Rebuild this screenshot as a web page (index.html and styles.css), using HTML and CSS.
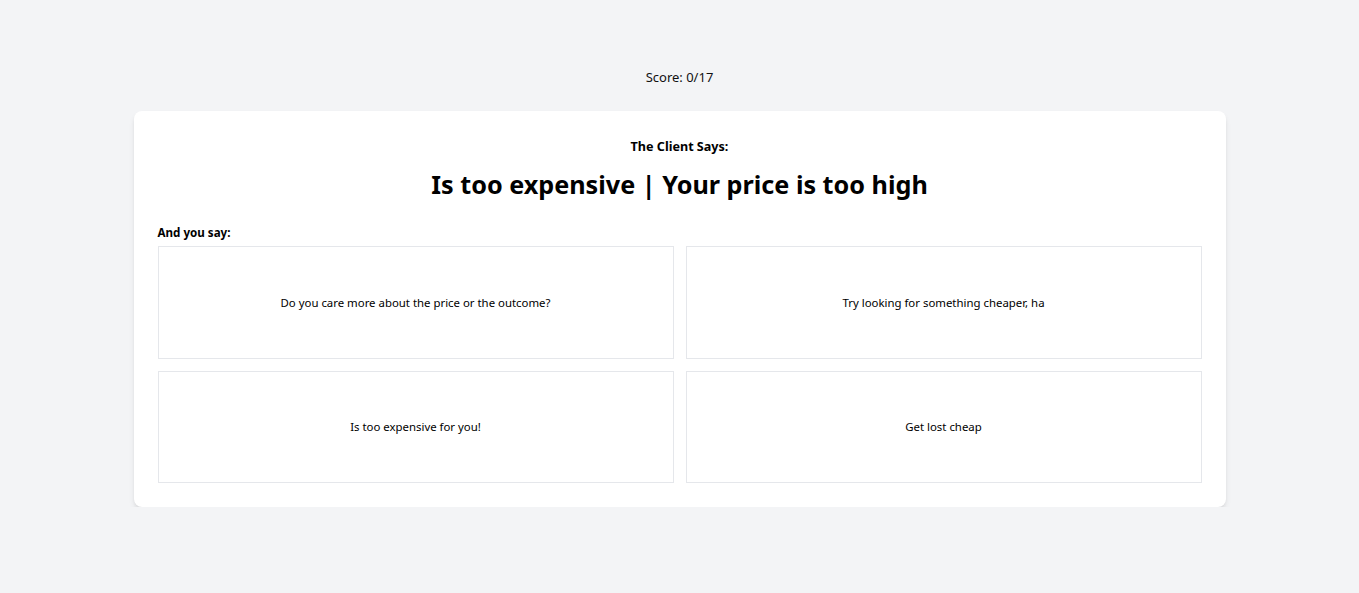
FILE: index.html
```html
<!DOCTYPE html>
<html lang="en">
<head>
<meta charset="utf-8">
<title>Quiz</title>
<link rel="stylesheet" href="styles.css">
</head>
<body>
<main class="page">
  <div class="score">Score: 0/17</div>
  <section class="card">
    <div class="label">The Client Says:</div>
    <h1 class="quote">Is too expensive | Your price is too high</h1>
    <div class="prompt">And you say:</div>
    <div class="options">
      <button class="option">Do you care more about the price or the outcome?</button>
      <button class="option">Try looking for something cheaper, ha</button>
      <button class="option">Is too expensive for you!</button>
      <button class="option">Get lost cheap</button>
    </div>
  </section>
</main>
</body>
</html>
```

FILE: styles.css
```css
html, body {
  margin: 0;
  padding: 0;
}
body {
  background: #f3f4f6;
  font-family: "Noto Sans", "Open Sans", sans-serif;
  color: #000;
}
.page {
  padding-top: 67px;
  display: flex;
  flex-direction: column;
  align-items: center;
}
.score {
  font-size: 13px;
  line-height: 20px;
  margin-bottom: 24px;
  color: #111;
}
.card {
  width: 1092px;
  box-sizing: border-box;
  background: #fff;
  border-radius: 8px;
  padding: 26px 24px 24px;
  box-shadow: 0 4px 6px -1px rgba(0,0,0,0.1), 0 2px 4px -2px rgba(0,0,0,0.1);
}
.label {
  text-align: center;
  font-weight: 700;
  font-size: 12.6px;
  line-height: 20px;
}
.quote {
  margin: 9px 0 0;
  text-align: center;
  font-weight: 700;
  font-size: 25.2px;
  line-height: 36px;
}
.prompt {
  margin-top: 21px;
  font-weight: 700;
  font-size: 11.6px;
  line-height: 20px;
  margin-bottom: 3px;
}
.options {
  display: grid;
  grid-template-columns: 1fr 1fr;
  gap: 12px;
}
.option {
  height: 112.5px;
  background: #fff;
  border: 1px solid #e5e7eb;
  font-family: inherit;
  font-size: 11.4px;
  color: #000;
  padding: 0 16px;
  cursor: pointer;
}
```
